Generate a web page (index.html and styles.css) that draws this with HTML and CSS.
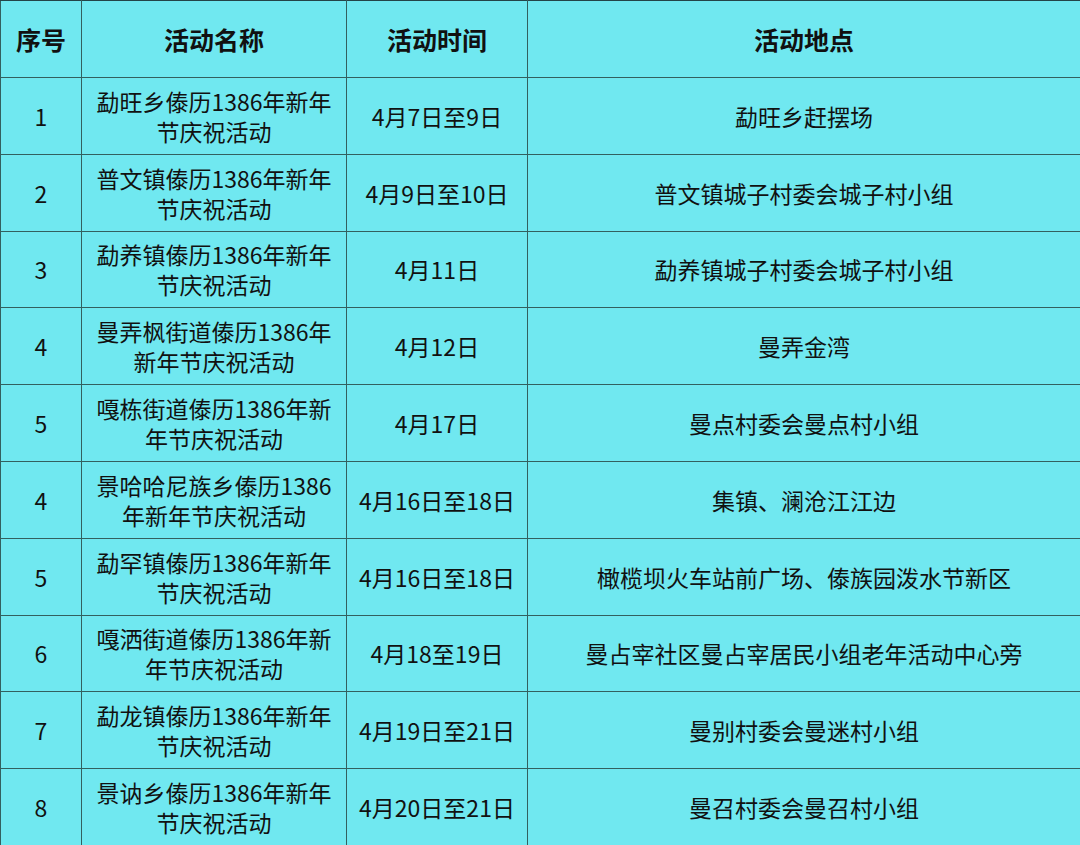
FILE: index.html
```html
<!DOCTYPE html>
<html lang="zh-CN">
<head>
<meta charset="utf-8">
<title>活动表</title>
<link rel="stylesheet" href="styles.css">
</head>
<body>
<table class="schedule">
  <colgroup>
    <col class="c-no">
    <col class="c-name">
    <col class="c-time">
    <col class="c-place">
  </colgroup>
  <thead>
    <tr><th>序号</th><th>活动名称</th><th>活动时间</th><th>活动地点</th></tr>
  </thead>
  <tbody>
    <tr><td>1</td><td class="name">勐旺乡傣历1386年新年<br>节庆祝活动</td><td>4月7日至9日</td><td>勐旺乡赶摆场</td></tr>
    <tr><td>2</td><td class="name">普文镇傣历1386年新年<br>节庆祝活动</td><td>4月9日至10日</td><td>普文镇城子村委会城子村小组</td></tr>
    <tr><td>3</td><td class="name">勐养镇傣历1386年新年<br>节庆祝活动</td><td>4月11日</td><td>勐养镇城子村委会城子村小组</td></tr>
    <tr><td>4</td><td class="name">曼弄枫街道傣历1386年<br>新年节庆祝活动</td><td>4月12日</td><td>曼弄金湾</td></tr>
    <tr><td>5</td><td class="name">嘎栋街道傣历1386年新<br>年节庆祝活动</td><td>4月17日</td><td>曼点村委会曼点村小组</td></tr>
    <tr><td>4</td><td class="name">景哈哈尼族乡傣历1386<br>年新年节庆祝活动</td><td>4月16日至18日</td><td>集镇、澜沧江江边</td></tr>
    <tr><td>5</td><td class="name">勐罕镇傣历1386年新年<br>节庆祝活动</td><td>4月16日至18日</td><td>橄榄坝火车站前广场、傣族园泼水节新区</td></tr>
    <tr><td>6</td><td class="name">嘎洒街道傣历1386年新<br>年节庆祝活动</td><td>4月18至19日</td><td>曼占宰社区曼占宰居民小组老年活动中心旁</td></tr>
    <tr><td>7</td><td class="name">勐龙镇傣历1386年新年<br>节庆祝活动</td><td>4月19日至21日</td><td>曼别村委会曼迷村小组</td></tr>
    <tr><td>8</td><td class="name">景讷乡傣历1386年新年<br>节庆祝活动</td><td>4月20日至21日</td><td>曼召村委会曼召村小组</td></tr>
  </tbody>
</table>
</body>
</html>
```

FILE: styles.css
```css
html, body {
  margin: 0;
  padding: 0;
  background: #70e8f0;
}
.schedule {
  width: 1080px;
  height: 845px;
  border-collapse: collapse;
  table-layout: fixed;
  background: #70e8f0;
  color: #111111;
  font-family: "Microsoft YaHei", "Noto Sans CJK SC", "Noto Sans", sans-serif;
}
.c-no { width: 81px; }
.c-name { width: 265px; }
.c-time { width: 181px; }
.c-place { width: 553px; }
.schedule th,
.schedule td {
  border: 1.5px solid #33605f;
  text-align: center;
  vertical-align: middle;
  padding: 0;
}
.schedule thead tr { height: 77px; }
.schedule tbody tr { height: 76.8px; }
.schedule th {
  font-size: 25px;
  font-weight: 700;
  line-height: 30px;
  border-top-color: #244448;
}
.schedule td {
  font-size: 23px;
  line-height: 30px;
}
```
